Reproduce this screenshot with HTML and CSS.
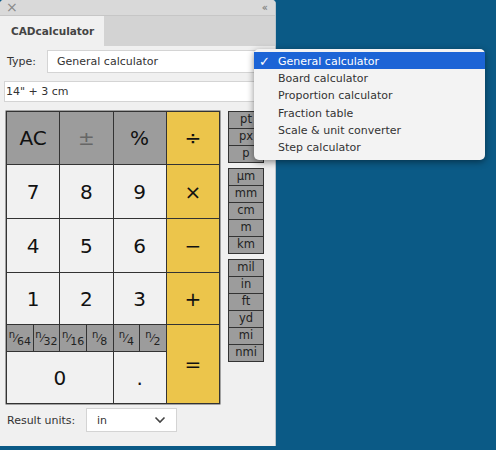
FILE: index.html
```html
<!DOCTYPE html>
<html lang="en">
<head>
    <meta charset="UTF-8">
    <title>CADcalculator</title>
    <link rel="stylesheet" href="styles.css">
</head>
<body>

    <div class="panel">

        <div class="titlebar">
            <span class="close">&times;</span>
            <span class="collapse">&lsaquo;&lsaquo;</span>
        </div>

        <div class="tabbar">
            <div class="tab">CADcalculator</div>
        </div>

        <div class="content">

            <div class="type-row">
                <label class="label">Type:</label>
                <div class="field type-select">General calculator</div>
            </div>

            <div class="field expr">14" + 3 cm</div>

            <div class="calc-area">

                <div class="keypad">
                    <div class="key gray">AC</div>
                    <div class="key gray dim">&plusmn;</div>
                    <div class="key gray">%</div>
                    <div class="key op">&divide;</div>

                    <div class="key">7</div>
                    <div class="key">8</div>
                    <div class="key">9</div>
                    <div class="key op">&times;</div>

                    <div class="key">4</div>
                    <div class="key">5</div>
                    <div class="key">6</div>
                    <div class="key op">&minus;</div>

                    <div class="key">1</div>
                    <div class="key">2</div>
                    <div class="key">3</div>
                    <div class="key op">+</div>

                    <div class="frac"><span class="num">n</span>&frasl;<span class="den">64</span></div>
                    <div class="frac"><span class="num">n</span>&frasl;<span class="den">32</span></div>
                    <div class="frac"><span class="num">n</span>&frasl;<span class="den">16</span></div>
                    <div class="frac"><span class="num">n</span>&frasl;<span class="den">8</span></div>
                    <div class="frac"><span class="num">n</span>&frasl;<span class="den">4</span></div>
                    <div class="frac"><span class="num">n</span>&frasl;<span class="den">2</span></div>
                    <div class="key op equals">=</div>

                    <div class="key zero">0</div>
                    <div class="key dot">.</div>
                </div>

                <div class="units">
                    <div class="unit-group">
                        <div class="unit">pt</div>
                        <div class="unit">px</div>
                        <div class="unit">p</div>
                    </div>
                    <div class="unit-group">
                        <div class="unit">&micro;m</div>
                        <div class="unit">mm</div>
                        <div class="unit">cm</div>
                        <div class="unit">m</div>
                        <div class="unit">km</div>
                    </div>
                    <div class="unit-group">
                        <div class="unit">mil</div>
                        <div class="unit">in</div>
                        <div class="unit">ft</div>
                        <div class="unit">yd</div>
                        <div class="unit">mi</div>
                        <div class="unit">nmi</div>
                    </div>
                </div>

            </div>

            <div class="result-row">
                <label class="label">Result units:</label>
                <div class="field result-select">
                    <span>in</span>
                    <svg class="chevron" width="12" height="8" viewBox="0 0 12 8">
                        <path d="M1.5 1.5 L6 6 L10.5 1.5" fill="none" stroke="#444" stroke-width="1.6"/>
                    </svg>
                </div>
            </div>

        </div>
    </div>

    <!-- open popup of the Type select -->
    <ul class="menu">
        <li class="selected"><span class="check">&#10003;</span>General calculator</li>
        <li>Board calculator</li>
        <li>Proportion calculator</li>
        <li>Fraction table</li>
        <li>Scale &amp; unit converter</li>
        <li>Step calculator</li>
    </ul>

</body>
</html>
```

FILE: styles.css
```css
body{
    margin: 0;
    width: 496px;
    height: 450px;
    background-color: #0b5a86;
    font-family: "DejaVu Sans", sans-serif;
    font-size: 11px;
    color: #333;
    position: relative;
    overflow: hidden;
}

.panel{
    width: 275px;
    height: 446px;
    background-color: #f0f0f0;
    border-right: 1px solid #b9c3ca;
    border-radius: 4px 4px 0 0;
    overflow: hidden;
}

.titlebar{
    height: 15px;
    background-color: #d9d9d9;
    display: flex;
    justify-content: space-between;
    align-items: center;
    padding: 0 9px 0 6px;
    color: #888;
}

.close{
    font-size: 14px;
    line-height: 15px;
}

.collapse{
    font-size: 10px;
    letter-spacing: -2px;
    font-weight: bold;
}

.tabbar{
    height: 31px;
    background-color: #d3d3d3;
    border-top: 1px solid #c6c6c6;
    box-sizing: border-box;
}

.tab{
    width: 104px;
    height: 31px;
    background-color: #f0f0f0;
    font-weight: bold;
    font-size: 10.5px;
    color: #444;
    padding-left: 11px;
    line-height: 31px;
    box-sizing: border-box;
}

.content{
    padding: 4px 7px 0 4px;
}

.label{
    color: #333;
}

.field{
    background-color: #fff;
    border: 1px solid #d4d4d4;
    box-sizing: border-box;
    color: #333;
}

.type-row{
    display: flex;
    align-items: center;
    height: 23px;
    padding-left: 3px;
}

.type-row .label{
    width: 40px;
}

.type-select{
    flex: 1;
    height: 23px;
    line-height: 21px;
    padding-left: 9px;
}

.expr{
    margin-top: 8px;
    height: 21px;
    line-height: 19px;
    padding-left: 1px;
}

.calc-area{
    display: flex;
    align-items: flex-start;
    margin-top: 9px;
    margin-left: 2px;
}

.keypad{
    width: 214px;
    height: 293px;
    display: grid;
    grid-template-columns: repeat(8, 1fr);
    grid-template-rows: 52px 53px 53px 51px 26px 51px;
    gap: 1px;
    border: 1px solid #333;
    background-color: #333;
    box-sizing: border-box;
    box-shadow: 0 0 0 0.5px #555;
}

.key{
    grid-column: span 2;
    background-color: #f1f1f1;
    display: flex;
    align-items: center;
    justify-content: center;
    font-size: 20px;
    color: #111;
}

.key.gray{
    background-color: #9c9c9c;
}

.key.dim{
    color: #666;
}

.key.op{
    background-color: #ecc54b;
}

.equals{
    grid-row: span 2;
}

.zero{
    grid-column: span 4;
}

.frac{
    background-color: #9c9c9c;
    display: flex;
    align-items: center;
    justify-content: center;
    font-size: 11px;
    color: #222;
}

.frac .num{
    position: relative;
    top: -4px;
    font-size: 10px;
}

.frac .den{
    position: relative;
    top: 3px;
    font-size: 11px;
}

.units{
    margin-left: 8px;
    width: 36px;
    display: flex;
    flex-direction: column;
    gap: 5px;
}

.unit-group{
    border: 1px solid #333;
    background-color: #333;
    display: flex;
    flex-direction: column;
    gap: 1px;
}

.unit{
    height: 16px;
    line-height: 15px;
    background-color: #9c9c9c;
    text-align: center;
    font-size: 11.5px;
    color: #222;
}

.result-row{
    display: flex;
    align-items: center;
    margin-top: 4px;
    padding-left: 3px;
}

.result-row .label{
    width: 79px;
}

.result-select{
    width: 91px;
    height: 24px;
    display: flex;
    align-items: center;
    justify-content: space-between;
    padding: 0 10px 0 10px;
}

.menu{
    position: absolute;
    top: 49px;
    left: 254px;
    width: 231px;
    height: 111px;
    margin: 0;
    padding: 3px 0 0 0;
    list-style: none;
    background-color: #f3f3f3;
    border-radius: 5px;
    box-shadow: 0 2px 7px rgba(0, 0, 0, 0.45);
    box-sizing: border-box;
}

.menu li{
    position: relative;
    height: 17.2px;
    line-height: 19px;
    padding-left: 24px;
    color: #333;
}

.menu li.selected{
    background-color: #1c64d6;
    color: #fff;
}

.check{
    position: absolute;
    left: 5px;
    font-size: 13px;
    font-weight: bold;
}
```
